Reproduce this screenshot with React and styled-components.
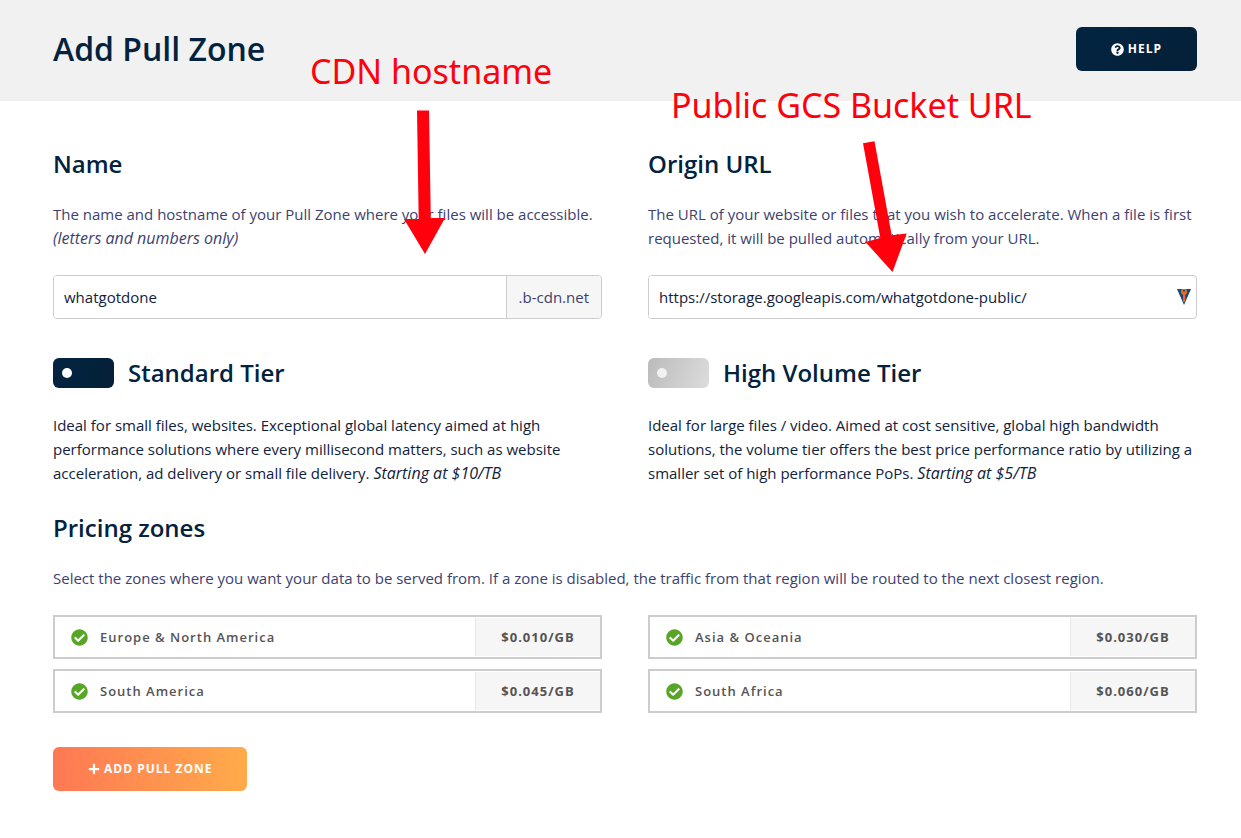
import React, { useState } from "react";
import styled, { createGlobalStyle } from "styled-components";
import { FaQuestionCircle, FaCheckCircle, FaPlus } from "react-icons/fa";

const GlobalStyle = createGlobalStyle`
  *, *::before, *::after { box-sizing: border-box; }
  body {
    margin: 0;
    background: #fff;
    color: #02223e;
    font-family: "Open Sans", "Noto Sans", sans-serif;
    font-size: 15px;
    line-height: 24px;
  }
  input, button { font: inherit; }
`;

const Header = styled.header`
  display: flex;
  align-items: center;
  justify-content: space-between;
  padding: 27px 44px 30px 53px;
  background: #f1f1f1;
`;

const PageTitle = styled.h1`
  margin: 0;
  font-size: 32px;
  line-height: 44px;
  font-weight: 600;
`;

const Button = styled.button`
  display: flex;
  align-items: center;
  justify-content: center;
  gap: 4px;
  height: 44px;
  padding: 0 35px;
  border: 0;
  border-radius: 6px;
  color: #fff;
  font-size: 12px;
  font-weight: 700;
  letter-spacing: 1px;
  text-transform: uppercase;
  cursor: pointer;
  background: ${(p) =>
    p.$accent
      ? "linear-gradient(90deg, #ff7854, #ffab4a)"
      : "linear-gradient(135deg, #022442, #052037)"};
`;

const Form = styled.form`
  padding: 47px 44px 47px 53px;
`;

const Columns = styled.div`
  display: grid;
  grid-template-columns: 1fr 1fr;
  column-gap: 46px;
  row-gap: ${(p) => p.$rowGap || 0}px;
`;

const Field = styled.section`
  position: relative;
`;

const Heading = styled.h2`
  margin: 0 0 22px;
  font-size: 24px;
  line-height: 32px;
  font-weight: 600;
`;

const Text = styled.p`
  margin: 0 0 25px;
  color: ${(p) => (p.$dark ? "#10223c" : "#3d3f70")};
`;

const Emphasis = styled.em`
  font-size: 16px;
`;

const InputGroup = styled.div`
  display: flex;
  align-items: center;
  height: 44px;
  border: 1px solid #ccc;
  border-radius: 4px;
  overflow: hidden;
`;

const TextInput = styled.input`
  flex: 1;
  min-width: 0;
  height: 42px;
  padding: 0 10px;
  border: 0;
  outline: 0;
  background: #fff;
  color: #10223c;
`;

const Suffix = styled.span`
  display: flex;
  align-items: center;
  height: 42px;
  padding: 0 12px;
  border-left: 1px solid #ccc;
  background: #f6f6f6;
  color: #3d3f70;
`;

const KeyBadge = styled.svg`
  width: 14px;
  height: 16px;
  margin-right: 5px;
`;

const Tiers = styled(Columns)`
  margin: 39px 0 2px;
`;

const TierTitle = styled.h2`
  display: flex;
  align-items: center;
  gap: 14px;
  margin: 0 0 25px;
  font-size: 24px;
  line-height: 30px;
  font-weight: 600;
`;

const Toggle = styled.input`
  appearance: none;
  width: 61px;
  height: 30px;
  margin: 0;
  padding: 10px 9px;
  border-radius: 6px;
  cursor: pointer;
  background: linear-gradient(110deg, #bbb, #dcdcdc);

  &::before {
    content: "";
    display: block;
    width: 10px;
    height: 10px;
    border-radius: 50%;
    background: #f1f1f1;
  }
  &:checked {
    background: linear-gradient(110deg, #022442, #052037);
  }
  &:checked::before {
    background: #fff;
  }
`;

const ZoneRow = styled.label`
  display: flex;
  align-items: center;
  height: 44px;
  padding: 1px 0 1px 16px;
  border: 2px solid #ccc;
  color: #545454;
  font-size: 13px;
  font-weight: 600;
  letter-spacing: 1px;
  cursor: pointer;
`;

const ZoneCheck = styled.span`
  display: grid;
  width: 17px;
  height: 17px;
  margin-right: 12px;

  > * {
    grid-area: 1 / 1;
    width: 17px;
    height: 17px;
    margin: 0;
  }
  input {
    appearance: none;
    border: 2px solid #ccc;
    border-radius: 50%;
  }
  svg {
    color: #58a528;
    visibility: hidden;
    pointer-events: none;
  }
  input:checked {
    border-color: transparent;
  }
  input:checked + svg {
    visibility: visible;
  }
`;

const ZoneName = styled.span`
  flex: 1;
`;

const ZonePrice = styled.span`
  display: flex;
  align-items: center;
  justify-content: center;
  width: 125px;
  height: 38px;
  border-left: 1px solid #e8e8e8;
  background: #f6f6f6;
  font-weight: 700;
`;

const Actions = styled.div`
  display: flex;
  margin-top: 34px;
`;

const Note = styled.span`
  position: absolute;
  left: ${(p) => p.$x}px;
  top: ${(p) => p.$y}px;
  color: #ff000c;
  font-family: "Noto Sans", "Open Sans", sans-serif;
  font-size: 34px;
  line-height: 48px;
  white-space: nowrap;
  pointer-events: none;
`;

const Arrow = styled.svg`
  position: absolute;
  left: ${(p) => p.$x}px;
  top: ${(p) => p.$y}px;
  fill: #ff000c;
  pointer-events: none;
`;

const ZONES = [
  ["Europe & North America", "$0.010/GB"],
  ["Asia & Oceania", "$0.030/GB"],
  ["South America", "$0.045/GB"],
  ["South Africa", "$0.060/GB"],
];

function Zone({ name, price }) {
  return (
    <ZoneRow>
      <ZoneCheck>
        <input type="checkbox" defaultChecked />
        <FaCheckCircle aria-hidden="true" />
      </ZoneCheck>
      <ZoneName>{name}</ZoneName>
      <ZonePrice>{price}</ZonePrice>
    </ZoneRow>
  );
}

function Tier({ id, title, price, checked, onSelect, children }) {
  return (
    <section>
      <TierTitle>
        <Toggle type="radio" name="tier" id={id} checked={checked} onChange={onSelect} />
        <label htmlFor={id}>{title}</label>
      </TierTitle>
      <Text $dark>
        {children} <Emphasis>{price}</Emphasis>
      </Text>
    </section>
  );
}

export default function App() {
  const [tier, setTier] = useState("standard");
  return (
    <>
      <GlobalStyle />
      <Header>
        <PageTitle>Add Pull Zone</PageTitle>
        <Button type="button">
          <FaQuestionCircle size={13} aria-hidden="true" />
          Help
        </Button>
      </Header>
      <Form onSubmit={(e) => e.preventDefault()}>
        <Columns>
          <Field>
            <Heading><label htmlFor="zone-name">Name</label></Heading>
            <Text>
              The name and hostname of your Pull Zone where your files will be accessible.
              <br />
              <Emphasis>(letters and numbers only)</Emphasis>
            </Text>
            <InputGroup>
              <TextInput id="zone-name" type="text" defaultValue="whatgotdone" />
              <Suffix>.b-cdn.net</Suffix>
            </InputGroup>
            <Note $x={257} $y={-101}>CDN hostname</Note>
            <Arrow $x={351} $y={-38} width="41" height="144" viewBox="0 0 41 144" aria-hidden="true">
              <path d="M13 .5H25L26.8 108H41L21 144 0 109H14.7Z" />
            </Arrow>
          </Field>
          <Field>
            <Heading><label htmlFor="origin-url">Origin URL</label></Heading>
            <Text>
              The URL of your website or files that you wish to accelerate. When a file is first
              requested, it will be pulled automatically from your URL.
            </Text>
            <InputGroup>
              <TextInput
                id="origin-url"
                type="text"
                defaultValue="https://storage.googleapis.com/whatgotdone-public/"
              />
              <KeyBadge viewBox="0 0 14 16" aria-hidden="true">
                <path d="M0 0H14L7 16Z" fill="#174a74" />
                <path
                  fillRule="evenodd"
                  fill="#f26522"
                  d="M5 0H9L10 1.500V4L8.300 6V12L7 13.300 6 12.500V6L4 4V1.500ZM6 1V2.500H8V1Z"
                />
              </KeyBadge>
            </InputGroup>
            <Note $x={23} $y={-67}>Public GCS Bucket URL</Note>
            <Arrow $x={215} $y={-7} width="44" height="132" viewBox="0 0 44 132" aria-hidden="true">
              <path d="M0 2.300L11.500 .3 28.700 94.300 43.700 92.500 29.500 131 2.500 101 17.300 97Z" />
            </Arrow>
          </Field>
        </Columns>

        <Tiers>
          <Tier
            id="tier-standard"
            title="Standard Tier"
            price="Starting at $10/TB"
            checked={tier === "standard"}
            onSelect={() => setTier("standard")}
          >
            Ideal for small files, websites. Exceptional global latency aimed at high performance
            solutions where every millisecond matters, such as website acceleration, ad delivery or
            small file delivery.
          </Tier>
          <Tier
            id="tier-volume"
            title="High Volume Tier"
            price="Starting at $5/TB"
            checked={tier === "volume"}
            onSelect={() => setTier("volume")}
          >
            Ideal for large files / video. Aimed at cost sensitive, global high bandwidth solutions,
            the volume tier offers the best price performance ratio by utilizing a smaller set of
            high performance PoPs.
          </Tier>
        </Tiers>

        <Heading>Pricing zones</Heading>
        <Text>
          Select the zones where you want your data to be served from. If a zone is disabled, the
          traffic from that region will be routed to the next closest region.
        </Text>
        <Columns $rowGap={10}>
          {ZONES.map(([name, price]) => (
            <Zone key={name} name={name} price={price} />
          ))}
        </Columns>
        <Actions>
          <Button type="submit" $accent>
            <FaPlus aria-hidden="true" />
            Add Pull Zone
          </Button>
        </Actions>
      </Form>
    </>
  );
}
